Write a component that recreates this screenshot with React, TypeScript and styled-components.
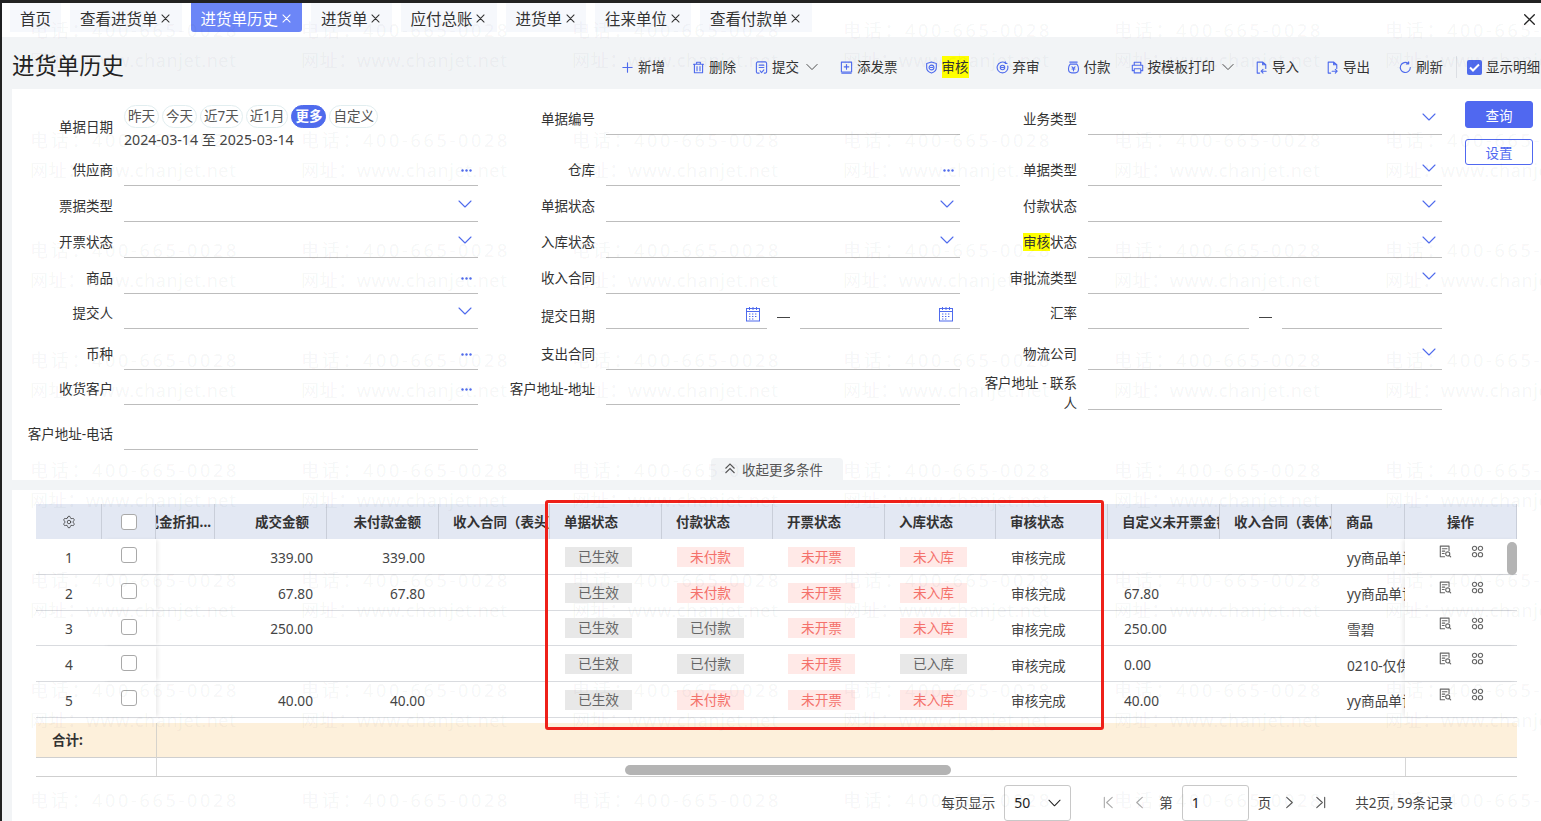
import React from "react";
import styled, { createGlobalStyle } from "styled-components";
import { Settings } from "lucide-react";

const BLUE = "#4f6bed";
const FONT = `"Noto Sans", "Noto Sans CJK SC", sans-serif`;
const COLS = "66px 54px 59px 112px 112px 111px 112px 111px 112px 111px 112px 112px 112px 73px 112px";

const Global = createGlobalStyle`
	html, body {
		margin: 0;
		padding: 0;
		background: #f2f4f6;
		font-family: ${FONT};
	}
`;

const Frame = styled.div`
	position: relative;
	width: 1541px;
	height: 821px;
	box-sizing: border-box;
	overflow: hidden;
	display: flex;
	flex-direction: column;
	background: #f2f4f6;
	border-top: 3px solid #222;
	border-left: 2px solid #222;
	color: #333;
	font-size: 13.5px;
`;

const WatermarkLayer = styled.div`
	position: absolute;
	top: 14px;
	left: 28px;
	z-index: 20;
	display: grid;
	grid-template-columns: repeat(6, 271px);
	grid-template-rows: repeat(8, 30px 80px);
	align-items: start;
	pointer-events: none;
	white-space: nowrap;
	color: rgba(30, 40, 60, 0.055);
	font-size: 18px;
	line-height: 26px;
`;

const Mark = styled.span<{ $wide?: boolean }>`
	letter-spacing: ${(p) => (p.$wide ? "2.7px" : "0.6px")};
`;

const TabBar = styled.div`
	display: flex;
	flex: 0 0 34px;
	gap: 9px;
	padding-left: 8px;
	background: #fff;
`;

const Tab = styled.div<{ $active?: boolean }>`
	display: flex;
	align-items: center;
	height: 29px;
	padding: 1px 10px 0;
	gap: 2px;
	box-sizing: border-box;
	font-size: 15.5px;
	white-space: nowrap;
	border-radius: ${(p) => (p.$active ? "0 0 3px 3px" : "0")};
	background: ${(p) => (p.$active ? "#6c86f7" : "#f6f8fc")};
	color: ${(p) => (p.$active ? "#fff" : "#333")};
`;

const TabClose = styled.span`
	display: flex;
	width: 12px;
	justify-content: center;
`;

const WindowClose = styled.span`
	display: flex;
	margin-left: auto;
	margin-right: 4px;
	margin-top: 9px;
	color: #222;
`;

const Toolbar = styled.div`
	display: flex;
	flex: 0 0 52px;
	box-sizing: border-box;
	align-items: center;
	padding: 8px 0 0 10px;
	white-space: nowrap;
	overflow: hidden;
`;

const PageTitle = styled.h1`
	flex: 0 0 609px;
	margin: -6px 0 0;
	font-size: 22.4px;
	font-weight: 400;
	color: #222;
`;

const ToolItem = styled.div<{ $ml: number }>`
	display: flex;
	align-items: center;
	flex: none;
	gap: 4px;
	margin-left: ${(p) => p.$ml}px;
	color: ${BLUE};
`;

const ToolText = styled.span<{ $mark?: boolean }>`
	color: #333;
	background: ${(p) => (p.$mark ? "#ffff00" : "transparent")};
	line-height: 22px;
`;

const ToolChevron = styled.span`
	display: flex;
	margin-left: 3px;
	color: #444;
`;

const ToolDivider = styled.span`
	flex: none;
	width: 1px;
	height: 22px;
	margin-left: 13px;
	background: #dcdfe4;
`;

const BlueCheck = styled.span`
	display: flex;
	flex: none;
	align-items: center;
	justify-content: center;
	width: 15px;
	height: 15px;
	margin-left: 10px;
	margin-right: 4px;
	border-radius: 2px;
	background: ${BLUE};
	color: #fff;
`;

const FilterPanel = styled.section`
	display: flex;
	flex-direction: column;
	flex: 0 0 391px;
	box-sizing: border-box;
	margin-left: 10px;
	padding-top: 12px;
	background: #fff;
`;

const FilterBody = styled.div`
	display: flex;
	align-items: flex-start;
`;

const FieldGrid = styled.div`
	display: grid;
	grid-template-columns: repeat(3, 466px);
	grid-template-rows: 50px 35px 36px 36px 36px 35px 41px 35px 45px;
	column-gap: 16px;
`;

const Field = styled.div<{ $top?: boolean; $drop?: boolean }>`
	display: flex;
	align-items: flex-end;
	gap: 11px;
	height: ${(p) => (p.$top ? "34px" : "auto")};
	margin-bottom: ${(p) => (p.$drop ? "-5px" : "0")};
`;

const FieldLabel = styled.label<{ $multi?: boolean; $low?: boolean }>`
	flex: 0 0 101px;
	text-align: right;
	line-height: ${(p) => (p.$multi ? "20px" : "28px")};
	margin-bottom: ${(p) => (p.$multi ? "-3px" : p.$low ? "-1px" : "2px")};
	color: #333;
`;

const LabelMark = styled.span`
	background: #ffff00;
`;

const InputLine = styled.div`
	display: flex;
	flex: 1;
	align-items: flex-end;
	justify-content: flex-end;
	height: 30px;
	border-bottom: 1px solid #bdbdbd;
	color: ${BLUE};
`;

const InputIcon = styled.span<{ $bottom: number }>`
	display: flex;
	margin-right: 6px;
	margin-bottom: ${(p) => p.$bottom}px;
`;

const RangeDash = styled.span`
	flex: 0 0 13px;
	height: 1px;
	margin-bottom: 11px;
	background: #444;
`;

const RangeWrap = styled.div`
	display: flex;
	flex: 1;
	align-items: flex-end;
	gap: 10px;
`;

const DateField = styled.div`
	display: flex;
	gap: 11px;
	align-items: flex-start;
`;

const DateLabel = styled.label`
	flex: 0 0 101px;
	margin-top: 12px;
	text-align: right;
	line-height: 28px;
`;

const DateColumn = styled.div`
	display: flex;
	flex-direction: column;
	gap: 1px;
	margin-top: 4px;
`;

const PillRow = styled.div`
	display: flex;
	gap: 3px;
`;

const Pill = styled.span<{ $active?: boolean }>`
	height: 23px;
	padding: 0 3px;
	box-sizing: border-box;
	line-height: 21px;
	border: 1px solid ${(p) => (p.$active ? BLUE : "#e2eef0")};
	border-radius: 12px;
	font-weight: ${(p) => (p.$active ? 700 : 400)};
	background: ${(p) => (p.$active ? BLUE : "#fff")};
	color: ${(p) => (p.$active ? "#fff" : "#555")};
`;

const DateRange = styled.div`
	line-height: 22px;
	font-size: 14.2px;
	color: #444;
`;

const ButtonColumn = styled.div`
	display: flex;
	flex-direction: column;
	gap: 11px;
	margin-left: 23px;
`;

const QueryButton = styled.button<{ $outline?: boolean }>`
	width: 68px;
	height: ${(p) => (p.$outline ? "26px" : "27px")};
	padding: 0;
	border-radius: 3px;
	font-family: inherit;
	font-size: 13.5px;
	border: 1px solid #5068f0;
	background: ${(p) => (p.$outline ? "#fff" : "#5068f0")};
	color: ${(p) => (p.$outline ? "#5068f0" : "#fff")};
`;

const CollapseTab = styled.div`
	display: flex;
	align-items: center;
	justify-content: center;
	gap: 6px;
	align-self: center;
	width: 132px;
	height: 22px;
	box-sizing: border-box;
	margin-top: 8px;
	padding: 0 6px 1px 0;
	border-radius: 4px 4px 0 0;
	background: #f2f4f6;
	color: #555;
`;

const TablePanel = styled.section`
	flex: 1;
	margin-top: 10px;
	margin-left: 10px;
	padding: 14px 24px 0;
	background: #fff;
`;

const TableWrap = styled.div`
	position: relative;
	width: 1481px;
`;

const HeadRow = styled.div`
	display: grid;
	grid-template-columns: ${COLS};
	height: 35px;
	background: #e3e8f3;
	font-weight: 700;
	font-size: 13.5px;
	color: #333;
`;

const HeadCell = styled.div<{ $align?: string; $pad?: string }>`
	display: flex;
	align-items: center;
	justify-content: ${(p) => p.$align || "flex-start"};
	padding: ${(p) => p.$pad || "0 0 2px 14px"};
	min-width: 0;
	overflow: hidden;
	white-space: nowrap;
	box-sizing: border-box;
	border-right: 1px solid #c9ced9;
`;

const HeadText = styled.span`
	flex: none;
`;

const BodyRow = styled.div`
	display: grid;
	grid-template-columns: ${COLS};
	height: 35.75px;
	box-sizing: border-box;
	border-bottom: 1px solid #d9dbdf;
`;

const Cell = styled.div<{ $align?: string; $pad?: string; $shadow?: "left" | "right" }>`
	position: relative;
	display: flex;
	align-items: center;
	justify-content: ${(p) => p.$align || "flex-start"};
	padding: ${(p) => p.$pad || "2px 0 0 15px"};
	min-width: 0;
	overflow: hidden;
	white-space: nowrap;
	box-sizing: border-box;
	color: #444;
	font-size: 13.7px;
	box-shadow: ${(p) =>
		p.$shadow === "right"
			? "3px 0 4px -1px rgba(0,0,0,0.08)"
			: p.$shadow === "left"
				? "-3px 0 4px -1px rgba(0,0,0,0.08)"
				: "none"};
	z-index: ${(p) => (p.$shadow ? 2 : 1)};
`;

const CellText = styled.span`
	flex: none;
`;

const Check = styled.span`
	display: block;
	width: 16px;
	height: 16px;
	box-sizing: border-box;
	border: 1px solid #a9a9a9;
	border-radius: 3px;
	background: #fff;
`;

const Badge = styled.span<{ $tone: "gray" | "red" }>`
	display: block;
	width: 67px;
	height: 20px;
	margin-top: -1px;
	line-height: 20px;
	text-align: center;
	background: ${(p) => (p.$tone === "red" ? "#ffe9e7" : "#e8e8e8")};
	color: ${(p) => (p.$tone === "red" ? "#f4716b" : "#666")};
`;

const ActionCell = styled(Cell)`
	align-items: flex-start;
	gap: 19px;
	color: #666;
`;

const SummaryRow = styled.div`
	display: grid;
	grid-template-columns: 121px 1fr;
	height: 35px;
	margin-top: 5px;
	background: #fdf0db;
	border-bottom: 1px solid #cfcfcf;
	box-sizing: border-box;
`;

const SummaryLabel = styled.div`
	padding-left: 16px;
	line-height: 35px;
	font-weight: 700;
	color: #333;
	border-right: 1px solid #d6d3cc;
`;

const ScrollStrip = styled.div`
	position: relative;
	display: grid;
	grid-template-columns: 121px 1249px 1fr;
	height: 19px;
	box-sizing: border-box;
	border-bottom: 1px solid #cfcfcf;
`;

const StripCol = styled.div`
	border-right: 1px solid #d6d6d6;
`;

const ScrollThumbH = styled.div`
	position: absolute;
	left: 589px;
	top: 7px;
	width: 326px;
	height: 10px;
	border-radius: 5px;
	background: #b4b4b4;
`;

const ScrollThumbV = styled.div`
	position: absolute;
	right: 0;
	top: 38px;
	width: 10px;
	height: 33px;
	border-radius: 5px;
	background: #b4b4b4;
	z-index: 3;
`;

const RedFrame = styled.div`
	position: absolute;
	left: 509px;
	top: -4px;
	width: 559px;
	height: 230px;
	box-sizing: border-box;
	border: 3px solid #ee2019;
	border-radius: 3px;
	z-index: 4;
	pointer-events: none;
`;

const Pager = styled.div`
	display: flex;
	align-items: center;
	justify-content: flex-end;
	height: 36px;
	margin-top: 8px;
	padding-right: 64px;
	color: #444;
`;

const PageText = styled.span<{ $ml: number }>`
	margin-left: ${(p) => p.$ml}px;
	margin-bottom: 2px;
`;

const PageIcon = styled.span<{ $ml: number; $off?: boolean }>`
	display: flex;
	margin-left: ${(p) => p.$ml}px;
	color: ${(p) => (p.$off ? "#aaa" : "#555")};
`;

const PageBox = styled.div<{ $ml: number }>`
	display: flex;
	align-items: center;
	justify-content: space-between;
	width: 67px;
	height: 36px;
	margin-left: ${(p) => p.$ml}px;
	padding: 0 9px;
	box-sizing: border-box;
	border: 1px solid #c8c8c8;
	border-radius: 3px;
	background: #fff;
	color: #222;
	font-size: 14px;
`;

type IconProps = { size?: number };

const Svg: React.FC<React.PropsWithChildren<{ size?: number; w?: number }>> = ({ size = 13, w = 1.2, children }) => (
	<svg width={size} height={size} viewBox="0 0 14 14" fill="none" stroke="currentColor" strokeWidth={w} strokeLinecap="round" strokeLinejoin="round">
		{children}
	</svg>
);

const Chevron: React.FC<IconProps> = ({ size = 14 }) => (
	<svg width={size} height={8} viewBox="0 0 14 8" fill="none" stroke="currentColor" strokeWidth="1.1" strokeLinecap="round" strokeLinejoin="round">
		<path d="M1 1l6 6 6-6" />
	</svg>
);

const Dots = () => (
	<svg width="11" height="3" viewBox="0 0 11 3" fill="currentColor">
		<circle cx="1.5" cy="1.5" r="1.2" />
		<circle cx="5.5" cy="1.5" r="1.2" />
		<circle cx="9.5" cy="1.5" r="1.2" />
	</svg>
);

const Calendar = () => (
	<svg width="16" height="16" viewBox="0 0 16 16" fill="none" stroke="currentColor" strokeWidth="1">
		<rect x="1.5" y="2.5" width="13" height="12.5" />
		<path d="M1.5 5.5h13M4.5 1v3M8 1v3M11.5 1v3" />
		<path d="M4 8h2M7 8h2M10 8h2M4 10.5h2M7 10.5h2M10 10.5h2M4 13h2M7 13h2" strokeDasharray="1 .6" />
	</svg>
);

const PlusIcon = () => <Svg><path d="M7 2v10M2 7h10" /></Svg>;
const TrashIcon = () => <Svg><path d="M5 3.2V1.4h4v1.8M1.6 3.5h10.8M2.6 3.5v9.2h8.8V3.5M5.4 6v4.4M8.6 6v4.4" /></Svg>;
const SubmitIcon = () => <Svg><path d="M4.5 13H3a1.5 1.5 0 0 1-1.5-1.5v-9A1.5 1.5 0 0 1 3 1h8a1.5 1.5 0 0 1 1.5 1.5v9A1.5 1.5 0 0 1 11 13h-1M4.5 4.5h5M4.5 7h5M5.5 10.5l1.5 2 2.5-3" /></Svg>;
const InvoiceIcon = () => <Svg><path d="M1.5 1.2h11v10.6h-11zM7 3.8v5M4.5 6.3h5M2 13.2h10" /></Svg>;
const ShieldIcon = () => <Svg><path d="M7 1l5.2 1.6v4.6c0 3-2.4 4.8-5.2 5.8-2.8-1-5.2-2.8-5.2-5.8V2.6z" /><circle cx="7" cy="7" r="2.6" /><path d="M5.8 7h2.4" /></Svg>;
const RevokeIcon = () => <Svg><path d="M12.6 5.4A5.8 5.8 0 1 1 10 2M10 .8V2.6h1.8" /><circle cx="7" cy="7" r="2.4" /><path d="M5.8 7h2.4" /></Svg>;
const PayIcon = () => <Svg><path d="M3 1.2h8M3.4 3.4h7.2M3.4 3.4C2 5 1.6 6.4 1.6 8.4c0 2.8 1.6 4.4 3.6 4.4h3.6c2 0 3.6-1.6 3.6-4.4 0-2-.4-3.4-1.8-5M5.4 6.2L7 8l1.6-1.8M5.4 8.6h3.2M7 8v2.6" /></Svg>;
const PrintIcon = () => <Svg><path d="M3.5 4.6V1.4h7v3.2M3.5 10.4H1.4V4.6h11.2v5.8h-2.1M3.5 8.4h7v4.4h-7z" /></Svg>;
const ImportIcon = () => <Svg><path d="M5 13H2.4V1.2h6L11.6 4v4M8.2 1.2V4h3.4M12 11H6.6M8.6 9l-2 2 2 2" /></Svg>;
const ExportIcon = () => <Svg><path d="M5 13H2.4V1.2h6L11.6 4v4M8.2 1.2V4h3.4M6.6 11H12M10 9l2 2-2 2" /></Svg>;
const RefreshIcon = () => <Svg><path d="M12.2 7A5.4 5.4 0 1 1 10 2.6M10.4 .8v2.4H8" /></Svg>;
const DocSearchIcon = () => <Svg><path d="M6 12.6H1.4V1.2h9.4v4.6M3.6 4h5M3.6 6.6h2.6M3.6 9.2h2" /><circle cx="9.4" cy="9.6" r="2.2" /><path d="M11 11.2l1.6 1.6" /></Svg>;
const AppsIcon = () => <Svg><circle cx="3.8" cy="3.6" r="2.3" /><circle cx="10.2" cy="3.6" r="2.3" /><circle cx="3.8" cy="10.4" r="2.3" /><circle cx="10.2" cy="10.4" r="2.3" /></Svg>;
const XIcon: React.FC<IconProps & { w?: number }> = ({ size = 11, w = 1.2 }) => <Svg size={size} w={w}><path d="M2.5 2.5l9 9M11.5 2.5l-9 9" /></Svg>;

const tabs = ["查看进货单", "进货单历史", "进货单", "应付总账", "进货单", "往来单位", "查看付款单"];

const tools = [
	{ text: "新增", icon: <PlusIcon />, ml: 0 },
	{ text: "删除", icon: <TrashIcon />, ml: 27 },
	{ text: "提交", icon: <SubmitIcon />, ml: 19, more: true },
	{ text: "添发票", icon: <InvoiceIcon />, ml: 22 },
	{ text: "审核", icon: <ShieldIcon />, ml: 27, mark: true },
	{ text: "弃审", icon: <RevokeIcon />, ml: 27 },
	{ text: "付款", icon: <PayIcon />, ml: 27 },
	{ text: "按模板打印", icon: <PrintIcon />, ml: 20 },
	{ text: "导入", icon: <ImportIcon />, ml: 21 },
	{ text: "导出", icon: <ExportIcon />, ml: 27 },
	{ text: "刷新", icon: <RefreshIcon />, ml: 29 },
];

type Kind = "none" | "chevron" | "dots" | "date" | "range";

const fields: { label: React.ReactNode; kind: Kind; top?: boolean; multi?: boolean }[] = [
	{ label: "单据编号", kind: "none", top: true },
	{ label: "业务类型", kind: "chevron", top: true },
	{ label: "供应商", kind: "dots" },
	{ label: "仓库", kind: "dots" },
	{ label: "单据类型", kind: "chevron" },
	{ label: "票据类型", kind: "chevron" },
	{ label: "单据状态", kind: "chevron" },
	{ label: "付款状态", kind: "chevron" },
	{ label: "开票状态", kind: "chevron" },
	{ label: "入库状态", kind: "chevron" },
	{ label: <><LabelMark>审核</LabelMark>状态</>, kind: "chevron" },
	{ label: "商品", kind: "dots" },
	{ label: "收入合同", kind: "none" },
	{ label: "审批流类型", kind: "chevron" },
	{ label: "提交人", kind: "chevron" },
	{ label: "提交日期", kind: "date" },
	{ label: "汇率", kind: "range" },
	{ label: "币种", kind: "dots" },
	{ label: "支出合同", kind: "none" },
	{ label: "物流公司", kind: "chevron" },
	{ label: "收货客户", kind: "dots" },
	{ label: "客户地址-地址", kind: "none" },
	{ label: "客户地址 - 联系人", kind: "none", multi: true },
	{ label: "客户地址-电话", kind: "none" },
];

const heads = ["单据状态", "付款状态", "开票状态", "入库状态", "审核状态", "自定义未开票金额", "收入合同（表体）", "商品"];

const rows = [
	{ amount: "339.00", unpaid: "339.00", pay: "未付款", stock: "未入库", custom: "", product: "yy商品单记录" },
	{ amount: "67.80", unpaid: "67.80", pay: "未付款", stock: "未入库", custom: "67.80", product: "yy商品单记录" },
	{ amount: "250.00", unpaid: "", pay: "已付款", stock: "未入库", custom: "250.00", product: "雪碧" },
	{ amount: "", unpaid: "", pay: "已付款", stock: "已入库", custom: "0.00", product: "0210-仅供测试" },
	{ amount: "40.00", unpaid: "40.00", pay: "未付款", stock: "未入库", custom: "40.00", product: "yy商品单记录" },
];

const tone = (s: string) => (s.startsWith("未") ? "red" : "gray");

const FieldInput: React.FC<{ kind: Kind }> = ({ kind }) => {
	if (kind === "date" || kind === "range") {
		const icon = kind === "date" ? <InputIcon $bottom={6}><Calendar /></InputIcon> : null;
		return (
			<RangeWrap>
				<InputLine>{icon}</InputLine>
				<RangeDash />
				<InputLine>{icon}</InputLine>
			</RangeWrap>
		);
	}
	return (
		<InputLine>
			{kind === "chevron" && <InputIcon $bottom={13}><Chevron /></InputIcon>}
			{kind === "dots" && <InputIcon $bottom={13}><Dots /></InputIcon>}
		</InputLine>
	);
};

export default function App() {
	return (
		<Frame>
			<Global />
			<TabBar>
				<Tab>首页</Tab>
				{tabs.map((t, i) => (
					<Tab key={i} $active={i === 1}>
						{t}
						<TabClose><XIcon size={11} w={1.4} /></TabClose>
					</Tab>
				))}
				<WindowClose><XIcon size={15} /></WindowClose>
			</TabBar>

			<Toolbar>
				<PageTitle>进货单历史</PageTitle>
				{tools.map((t) => (
					<ToolItem key={t.text} $ml={t.ml}>
						{t.icon}
						<ToolText $mark={t.mark}>{t.text}</ToolText>
						{(t.text === "提交" || t.text === "按模板打印") && <ToolChevron><Chevron size={12} /></ToolChevron>}
					</ToolItem>
				))}
				<ToolDivider />
				<BlueCheck>
					<svg width="11" height="9" viewBox="0 0 11 9" fill="none" stroke="currentColor" strokeWidth="2"><path d="M1 4.5l3 3 6-6" /></svg>
				</BlueCheck>
				<ToolText>显示明细</ToolText>
			</Toolbar>

			<FilterPanel>
				<FilterBody>
					<FieldGrid>
						<DateField>
							<DateLabel>单据日期</DateLabel>
							<DateColumn>
								<PillRow>
									<Pill>昨天</Pill>
									<Pill>今天</Pill>
									<Pill>近7天</Pill>
									<Pill>近1月</Pill>
									<Pill $active>更多</Pill>
									<Pill>自定义</Pill>
								</PillRow>
								<DateRange>2024-03-14 至 2025-03-14</DateRange>
							</DateColumn>
						</DateField>
						{fields.map((f, i) => (
							<Field key={i} $top={f.top} $drop={f.multi}>
								<FieldLabel $multi={f.multi} $low={f.kind === "date"}>{f.label}</FieldLabel>
								<FieldInput kind={f.kind} />
							</Field>
						))}
					</FieldGrid>
					<ButtonColumn>
						<QueryButton>查询</QueryButton>
						<QueryButton $outline>设置</QueryButton>
					</ButtonColumn>
				</FilterBody>
				<CollapseTab>
					<svg width="12" height="11" viewBox="0 0 12 11" fill="none" stroke="#555" strokeWidth="1.1"><path d="M1.5 5.5L6 1l4.5 4.5M1.5 10L6 5.5l4.5 4.5" /></svg>
					收起更多条件
				</CollapseTab>
			</FilterPanel>

			<TablePanel>
				<TableWrap>
					<RedFrame />
					<ScrollThumbV />
					<HeadRow>
						<HeadCell $align="center" $pad="0"><Settings size={14} strokeWidth={1.3} /></HeadCell>
						<HeadCell $align="center" $pad="0"><Check /></HeadCell>
						<HeadCell $align="flex-end" $pad="0 3px 2px 0"><HeadText>现金折扣...</HeadText></HeadCell>
						<HeadCell $align="flex-end" $pad="0 17px 2px 0">成交金额</HeadCell>
						<HeadCell $align="flex-end" $pad="0 17px 2px 0">未付款金额</HeadCell>
						<HeadCell><HeadText>收入合同（表头）</HeadText></HeadCell>
						{heads.map((h) => (
							<HeadCell key={h}><HeadText>{h}</HeadText></HeadCell>
						))}
						<HeadCell $align="center" $pad="0 0 2px">操作</HeadCell>
					</HeadRow>
					{rows.map((r, i) => (
						<BodyRow key={i}>
							<Cell $align="center" $pad="2px 0 0">{i + 1}</Cell>
							<Cell $align="center" $pad="0 0 2px" $shadow="right"><Check /></Cell>
							<Cell />
							<Cell $align="flex-end" $pad="2px 14px 0 0">{r.amount}</Cell>
							<Cell $align="flex-end" $pad="2px 14px 0 0">{r.unpaid}</Cell>
							<Cell />
							<Cell><Badge $tone="gray">已生效</Badge></Cell>
							<Cell><Badge $tone={tone(r.pay)}>{r.pay}</Badge></Cell>
							<Cell><Badge $tone="red">未开票</Badge></Cell>
							<Cell><Badge $tone={tone(r.stock)}>{r.stock}</Badge></Cell>
							<Cell>审核完成</Cell>
							<Cell $pad="2px 0 0 16px">{r.custom}</Cell>
							<Cell />
							<Cell><CellText>{r.product}</CellText></Cell>
							<ActionCell $pad="6px 0 0 34px" $shadow="left">
								<DocSearchIcon />
								<AppsIcon />
							</ActionCell>
						</BodyRow>
					))}
					<SummaryRow>
						<SummaryLabel>合计:</SummaryLabel>
						<div />
					</SummaryRow>
					<ScrollStrip>
						<StripCol />
						<StripCol />
						<div />
						<ScrollThumbH />
					</ScrollStrip>
				</TableWrap>
				<Pager>
					<PageText $ml={0}>每页显示</PageText>
					<PageBox $ml={9}>
						50
						<Chevron size={13} />
					</PageBox>
					<PageIcon $ml={31} $off>
						<Svg size={13}><path d="M2.5 1.5v11M11 1.5L5 7l6 5.5" /></Svg>
					</PageIcon>
					<PageIcon $ml={18} $off>
						<Svg size={13}><path d="M10 1.5L4 7l6 5.5" /></Svg>
					</PageIcon>
					<PageText $ml={13}>第</PageText>
					<PageBox $ml={9}>1</PageBox>
					<PageText $ml={9}>页</PageText>
					<PageIcon $ml={12}>
						<Svg size={13}><path d="M4 1.5L10 7l-6 5.5" /></Svg>
					</PageIcon>
					<PageIcon $ml={18}>
						<Svg size={13}><path d="M3 1.5L9 7l-6 5.5M11.5 1.5v11" /></Svg>
					</PageIcon>
					<PageText $ml={28}>共2页, 59条记录</PageText>
				</Pager>
			</TablePanel>

			<WatermarkLayer>
				{Array.from({ length: 8 }).flatMap((_, r) => [
					...Array.from({ length: 6 }).map((_, c) => <Mark key={`p${r}${c}`} $wide>电话：400-665-0028</Mark>),
					...Array.from({ length: 6 }).map((_, c) => <Mark key={`w${r}${c}`}>网址：www.chanjet.net</Mark>),
				])}
			</WatermarkLayer>
		</Frame>
	);
}
